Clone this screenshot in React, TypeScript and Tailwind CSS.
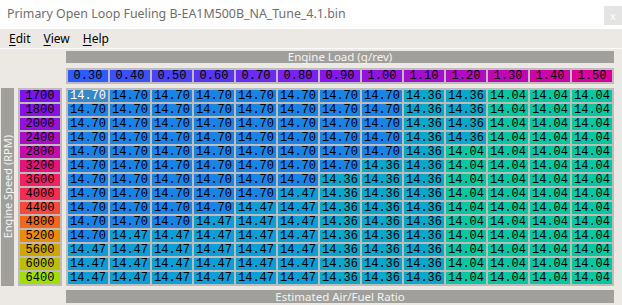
import React from "react";

const cols = ["0.30","0.40","0.50","0.60","0.70","0.80","0.90","1.00","1.10","1.20","1.30","1.40","1.50"];
const colColors = ["#2e5bff","#3d4ff7","#4a42f3","#5836ef","#6a2cee","#7a20f0","#8516ec","#9312de","#a30fd2","#b00bc3","#bf06b6","#cb03a8","#d8019c"];

const rows = ["1700","1800","2000","2400","2800","3200","3600","4000","4400","4800","5200","5600","6000","6400"];
const rowColors = ["#7c14ee","#8612e6","#9410db","#a80ec8","#c40bb0","#e2127f","#f51f66","#f52a55","#f44a3c","#f0681c","#e88c0a","#d2a600","#bcbf00","#a0e000"];

function rowVals(a: number, b: number, c: number, d: number): string[] {
  return [
    ...Array(a).fill("14.70"),
    ...Array(b).fill("14.47"),
    ...Array(c).fill("14.36"),
    ...Array(d).fill("14.04"),
  ];
}

const data: string[][] = [
  rowVals(8, 0, 2, 3),
  rowVals(8, 0, 2, 3),
  rowVals(8, 0, 2, 3),
  rowVals(8, 0, 2, 3),
  rowVals(8, 0, 1, 4),
  rowVals(7, 0, 2, 4),
  rowVals(6, 0, 3, 4),
  rowVals(5, 1, 3, 4),
  rowVals(4, 2, 3, 4),
  rowVals(3, 3, 3, 4),
  rowVals(1, 5, 3, 4),
  rowVals(0, 6, 3, 4),
  rowVals(0, 6, 3, 4),
  rowVals(0, 6, 3, 4),
];

const valColor: Record<string, string> = {
  "14.70": "#1a84e6",
  "14.47": "#0b9fd6",
  "14.36": "#09a7ca",
  "14.04": "#03c8a0",
};

const mono = { fontFamily: '"Liberation Mono", "Courier New", monospace' };

export default function App() {
  return (
    <div className="w-[622px] h-[305px] bg-[#ece9e5] overflow-hidden text-black" style={{ fontFamily: '"Noto Sans", "Segoe UI", sans-serif' }}>
      <div className="h-[29px] bg-white flex justify-between">
        <div className="pl-[7px] pt-[5px] text-[12.4px] text-[#6f6f6f] leading-[18px]">
          Primary Open Loop Fueling B-EA1M500B_NA_Tune_4.1.bin
        </div>
        <div className="mt-[6px] w-[18px] h-[19px] bg-[#e4e4e4] flex items-center justify-center text-white text-[11px] leading-none">
          x
        </div>
      </div>
      <div className="h-[19px] flex items-center text-[12px] border-b border-[#fafafa] box-content">
        <span className="ml-[9px]"><span className="underline underline-offset-2">E</span>dit</span>
        <span className="ml-[13px]"><span className="underline underline-offset-2">V</span>iew</span>
        <span className="ml-[13px]"><span className="underline underline-offset-2">H</span>elp</span>
      </div>
      <div className="flex pt-[2px]">
        <div className="w-[66px] flex pt-[37px] pl-[1px] gap-[4px]">
          <div className="w-[13px] h-[198px] bg-[#a09f9b] flex items-center justify-center">
            <span className="[writing-mode:vertical-rl] rotate-180 text-[11px] text-[#f4f4f4] whitespace-nowrap leading-[13px]">
              Engine Speed (RPM)
            </span>
          </div>
          <div className="w-[44px] h-[198px] bg-[#bdbcba] p-[2px] flex flex-col gap-[2px]" style={mono}>
            {rows.map((r, i) => (
              <div key={r} className="h-[12px] flex items-center justify-center text-[12px] leading-none" style={{ backgroundColor: rowColors[i] }}>
                {r}
              </div>
            ))}
          </div>
        </div>
        <div className="w-[548px] flex flex-col">
          <div className="h-[12px] bg-[#a09f9b] flex items-center justify-center text-[11.5px] text-[#f4f4f4] leading-none">
            Engine Load (g/rev)
          </div>
          <div className="mt-[5px] bg-[#bdbcba] p-[2px] grid grid-cols-[repeat(13,40px)] gap-[2px]" style={mono}>
            {cols.map((c, i) => (
              <div key={c} className="h-[12px] flex items-center justify-center text-[12px] leading-none" style={{ backgroundColor: colColors[i] }}>
                {c}
              </div>
            ))}
          </div>
          <div className="mt-[4px] bg-[#bdbcba] p-[2px] grid grid-cols-[repeat(13,40px)] gap-[2px]" style={mono}>
            {data.map((row, ri) =>
              row.map((v, ci) => {
                const sel = ri === 0 && ci === 0;
                return (
                  <div
                    key={`${ri}-${ci}`}
                    className={`h-[12px] flex items-center justify-center text-[12px] leading-none ${sel ? "text-white" : "text-black"}`}
                    style={{ backgroundColor: sel ? "#3788c9" : valColor[v] }}
                  >
                    {v}
                  </div>
                );
              })
            )}
          </div>
          <div className="mt-[4px] h-[13px] bg-[#a09f9b] flex items-center justify-center text-[11.5px] text-[#f4f4f4] leading-none">
            Estimated Air/Fuel Ratio
          </div>
        </div>
      </div>
    </div>
  );
}
